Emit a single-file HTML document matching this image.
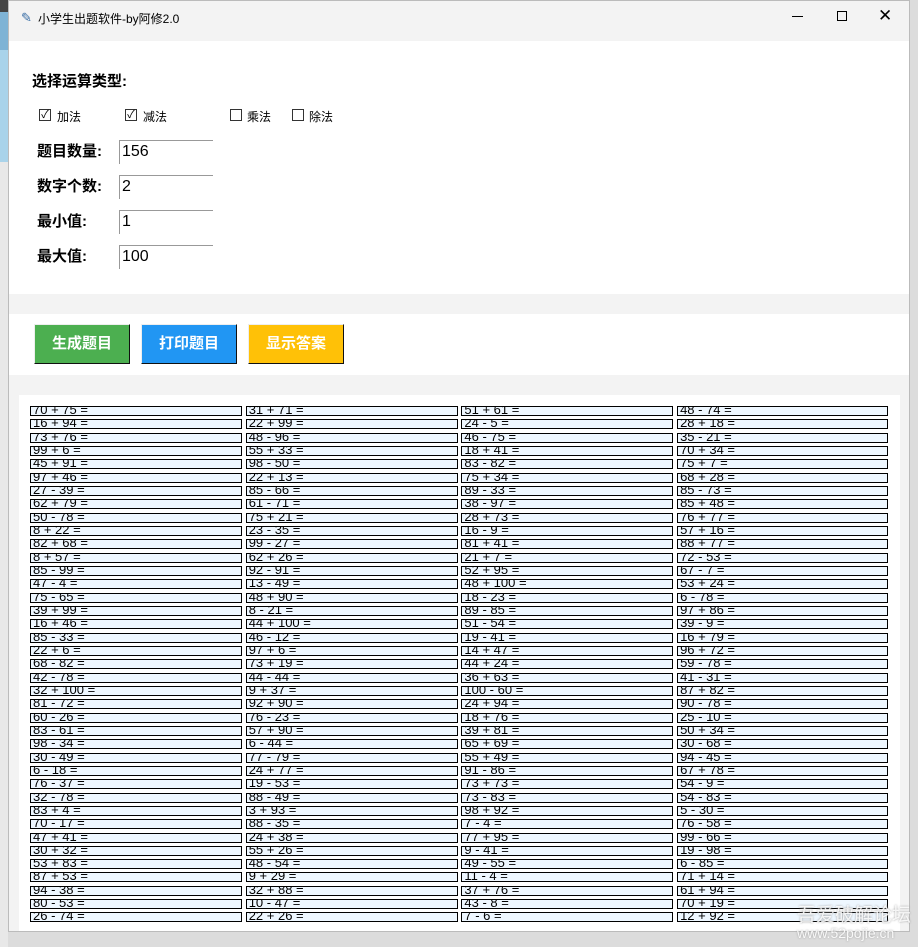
<!DOCTYPE html>
<html><head><meta charset="utf-8"><style>
*{margin:0;padding:0;box-sizing:border-box}
body{width:918px;height:947px;background:#dcdcdc;position:relative;overflow:hidden;font-family:"Liberation Sans","Noto Sans CJK SC",sans-serif}
.abs{position:absolute}
#win{left:8px;top:0;width:902px;height:932px;background:#f3f3f3;border:1px solid #bbb}
#title{left:0;top:0;width:900px;height:40px;background:#f3f3f3}
.b{font-weight:bold;font-size:15px;color:#000}
.cb{width:12px;height:12px;border:1px solid #333;background:#fff;font-size:11px;line-height:10px;text-align:center}
.cl{font-size:12px}
.ent{width:94px;height:24px;border-top:1px solid #999;border-left:1px solid #999;background:#fff;font-size:16px;padding-left:2px;line-height:22px}
.btn{width:96px;height:40px;color:#fff;font-weight:bold;font-size:15px;text-align:center;line-height:38px;border:1px solid;border-color:#eee #111 #111 #eee}
#grid{left:30px;top:406px;display:grid;grid-template-columns:212px 212px 212px 211px;column-gap:3.7px;grid-auto-rows:13.34px}
.c{height:10px;border:1px solid #000;background:#eef7ff;font-size:13px;line-height:6px;padding-left:2px;overflow:hidden;white-space:pre;color:#000}
</style></head><body>
<div class="abs" style="left:0;top:0;width:8px;height:947px;background:#e8e8e8"></div>
<div class="abs" style="left:0;top:0;width:8px;height:12px;background:#444"></div>
<div class="abs" style="left:0;top:12px;width:8px;height:38px;background:#7fb3d5"></div>
<div class="abs" style="left:0;top:50px;width:8px;height:112px;background:#a9d3ea"></div>
<div id="win" class="abs">
<div id="title" class="abs">
<div class="abs" style="left:12px;top:9px;font-size:13px;color:#3a6ea5">✎</div>
<div class="abs" style="left:29px;top:9px;font-size:12px">小学生出题软件-by阿修2.0</div>
<div class="abs" style="left:783px;top:15px;width:11px;height:1px;background:#000"></div>
<div class="abs" style="left:828px;top:10px;width:10px;height:10px;border:1px solid #000"></div>
<div class="abs" style="left:869px;top:5px;font-size:17px;font-weight:300">✕</div>
</div>
<div class="abs" style="left:0;top:40px;width:900px;height:253px;background:#fff"></div>
<div class="abs b" style="left:23px;top:69px">选择运算类型:</div>
<div class="abs cb" style="left:30px;top:108px">✓</div><div class="abs cl" style="left:48px;top:107px">加法</div>
<div class="abs cb" style="left:116px;top:108px">✓</div><div class="abs cl" style="left:134px;top:107px">减法</div>
<div class="abs cb" style="left:221px;top:108px"></div><div class="abs cl" style="left:238px;top:107px">乘法</div>
<div class="abs cb" style="left:283px;top:108px"></div><div class="abs cl" style="left:300px;top:107px">除法</div>
<div class="abs b" style="left:28px;top:139px">题目数量:</div><div class="abs ent" style="left:110px;top:139px">156</div>
<div class="abs b" style="left:28px;top:174px">数字个数:</div><div class="abs ent" style="left:110px;top:174px">2</div>
<div class="abs b" style="left:28px;top:209px">最小值:</div><div class="abs ent" style="left:110px;top:209px">1</div>
<div class="abs b" style="left:28px;top:244px">最大值:</div><div class="abs ent" style="left:110px;top:244px">100</div>
<div class="abs" style="left:0;top:313px;width:900px;height:61px;background:#fff"></div>
<div class="abs btn" style="left:25px;top:323px;background:#4caf50">生成题目</div>
<div class="abs btn" style="left:132px;top:323px;background:#2196f3">打印题目</div>
<div class="abs btn" style="left:239px;top:323px;background:#ffc107">显示答案</div>
<div class="abs" style="left:10px;top:394px;width:881px;height:536px;background:#fff"></div>
</div>
<div id="grid" class="abs"></div>
<script>
const c1="70 + 75,16 + 94,73 + 76,99 + 6,45 + 91,97 + 46,27 - 39,62 + 79,50 - 78,8 + 22,82 + 68,8 + 57,85 - 99,47 - 4,75 - 65,39 + 99,16 + 46,85 - 33,22 + 6,68 - 82,42 - 78,32 + 100,81 - 72,60 - 26,83 - 61,98 - 34,30 - 49,6 - 18,76 - 37,32 - 78,83 + 4,70 - 17,47 + 41,30 + 32,53 + 83,87 + 53,94 - 38,80 - 53,26 - 74".split(",");
const c2="31 + 71,22 + 99,48 - 96,55 + 33,98 - 50,22 + 13,85 - 66,61 - 71,75 + 21,23 - 35,99 - 27,62 + 26,92 - 91,13 - 49,48 + 90,8 - 21,44 + 100,46 - 12,97 + 6,73 + 19,44 - 44,9 + 37,92 + 90,76 - 23,57 + 90,6 - 44,77 - 79,24 + 77,19 - 53,88 - 49,3 + 93,88 - 35,24 + 38,55 + 26,48 - 54,9 + 29,32 + 88,10 - 47,22 + 26".split(",");
const c3="51 + 61,24 - 5,46 - 75,18 + 41,83 - 82,75 + 34,89 - 33,38 - 97,28 + 73,16 - 9,81 + 41,21 + 7,52 + 95,48 + 100,18 - 23,89 - 85,51 - 54,19 - 41,14 + 47,44 + 24,36 + 63,100 - 60,24 + 94,18 + 76,39 + 81,65 + 69,55 + 49,91 - 86,73 + 73,73 - 83,98 + 92,7 - 4,77 + 95,9 - 41,49 - 55,11 - 4,37 + 76,43 - 8,7 - 6".split(",");
const c4="48 - 74,28 + 18,35 - 21,70 + 34,75 + 7,68 + 28,85 - 73,85 + 48,76 + 77,57 + 16,88 + 77,72 - 53,67 - 7,53 + 24,6 - 78,97 + 86,39 - 9,16 + 79,96 + 72,59 - 78,41 - 31,87 + 82,90 - 78,25 - 10,50 + 34,30 - 68,94 - 45,67 + 78,54 - 9,54 - 83,5 - 30,76 - 58,99 - 66,19 - 98,6 - 85,71 + 14,61 + 94,70 + 19,12 + 92".split(",");
let h="";for(let i=0;i<39;i++){for(const c of [c1,c2,c3,c4])h+='<div class="c">'+c[i]+' =</div>';}
document.getElementById("grid").innerHTML=h;
</script>
<div class="abs" style="left:797px;top:900px;font-size:19px;color:rgba(255,255,255,.85);text-shadow:0 0 2px #999">吾爱破解论坛</div>
<div class="abs" style="left:797px;top:925px;font-size:14px;color:rgba(255,255,255,.9);text-shadow:0 0 2px #999">www.52pojie.cn</div>
</body></html>
